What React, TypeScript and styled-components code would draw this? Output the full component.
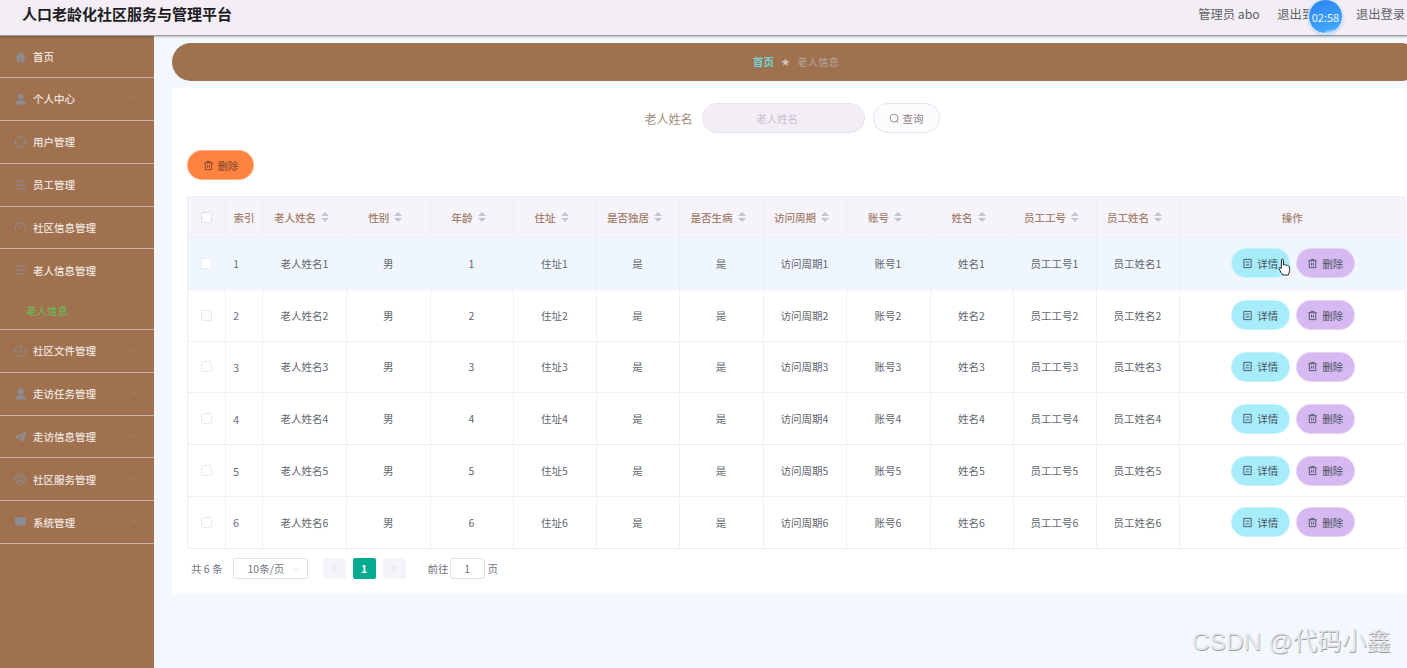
import React from "react";
import styled, { createGlobalStyle } from "styled-components";
import { ChevronDown, ChevronUp, ChevronLeft, ChevronRight, Crosshair, SlidersHorizontal, Gauge, Clock, LifeBuoy, Menu } from "lucide-react";

const Global = createGlobalStyle`
  html, body { margin: 0; padding: 0; height: 100%; overflow: hidden; }
  body { font-family: "Noto Sans CJK SC", "Noto Sans", sans-serif; background: #f3f7fe; }
  * { box-sizing: border-box; }
`;

const Page = styled.div`position: relative; width: 1407px; height: 668px; overflow: hidden; display: flex; flex-direction: column;`;
const Header = styled.header`
  height: 36px; flex: none; background: #f3eef5; display: flex; align-items: center; justify-content: space-between;
  padding: 0 2px 8px 22px; border-bottom: 1px solid #9b9b9f; box-shadow: 0 1px 2px rgba(0,0,0,.25); position: relative; z-index: 2;
`;
const Title = styled.h1`margin: 0; font-size: 15px; line-height: 20px; font-weight: 700; color: #1c1c22;`;
const HeaderLinks = styled.div`display: flex; gap: 17.5px; font-size: 12.25px; color: #5f5f66; line-height: 18px;`;
const Timer = styled.div`
  position: absolute; left: 1308px; top: -1px; width: 35px; height: 35px; border-radius: 50%; z-index: 5; overflow: hidden;
  background: linear-gradient(160deg, #2a86ee 0%, #3ea2fb 75%, #62bdfc 100%);
  border: 1px solid #d9ecfb; box-shadow: 0 1px 3px rgba(60,130,220,.35);
  color: #eaf5ff; font-size: 11px; display: flex; align-items: center; justify-content: center;
  &::after {
    content: ""; position: absolute; left: 8px; right: -6px; bottom: -25px; height: 28px; border-radius: 50%;
    background: rgba(190,232,255,.6); transform: rotate(-10deg);
  }
`;

const Body = styled.div`flex: 1; display: flex; min-height: 0;`;
const Side = styled.nav`width: 154px; flex: none; background: #a0714f; display: flex; flex-direction: column;`;
const NavGroup = styled.div`border-bottom: 1px solid #c9b6a9; flex: none;`;
const NavRow = styled.div<{ $first?: boolean }>`
  height: ${(p) => (p.$first ? 41 : 41.85)}px; display: flex; align-items: center; padding-left: 14px; position: relative;
  color: #f5eee9; font-size: 10.5px; text-shadow: 0 0 1px rgba(255,255,255,.3);
`;
const NavIcon = styled.span`width: 13px; height: 13px; margin-right: 6px; display: flex; align-items: center; justify-content: center; color: #8c8c92;`;
const NavArrow = styled.span`position: absolute; left: 129px; top: 15px; color: #b8947b; display: flex;`;
const SubItem = styled.div`height: 37.7px; padding: 0 0 0 26px; display: flex; align-items: center; color: #62c25a; font-size: 10.5px;`;

const Main = styled.main`flex: 1; min-width: 0; overflow: hidden; padding: 7px 0 0 18px;`;
const Crumb = styled.div`
  width: 1248px; height: 38px; border-radius: 19px; background: #a0714f; display: flex; align-items: center; justify-content: center;
  gap: 7px; font-size: 10.5px; color: #b3a498; padding-bottom: 1px;
`;
const CrumbHome = styled.span`color: #6fd6d4; font-weight: 700;`;
const CrumbStar = styled.span`color: #cfc4bc; font-size: 9px;`;

const Card = styled.section`width: 1248px; height: 506px; margin-top: 7px; background: #fff; padding: 15px 15px 0;`;
const Search = styled.div`display: flex; align-items: center; justify-content: center; height: 30px; padding-right: 8px;`;
const SearchLabel = styled.label`font-size: 12px; color: #a18a7a; margin-right: 9px;`;
const SearchInput = styled.div`
  width: 163px; height: 30px; border-radius: 15px; background: #f3eef6; border: 1px solid #e8e3f0; color: #c6c1cf; padding-right: 12px;
  font-size: 10.5px; display: flex; align-items: center; justify-content: center;
`;
const SearchBtn = styled.button`
  margin-left: 8px; width: 67px; height: 30px; border-radius: 15px; background: #fcfbfe; border: 1px solid #e6e2ef; color: #8d8085;
  font: inherit; font-size: 10.5px; display: flex; align-items: center; justify-content: center; gap: 3px; padding: 0;
`;
const Pill = styled.button<{ $bg: string }>`
  width: ${(p) => (p.$bg === "#ff8240" ? 67 : 59)}px; height: 30px; border-radius: 15px; padding: 0; background: ${(p) => p.$bg};
  border: 1px solid rgba(255,255,255,.35); color: ${(p) => (p.$bg === "#ff8240" ? "#7a4526" : "#475260")};
  font: inherit; font-size: 10.5px; display: inline-flex; align-items: center; justify-content: center; gap: 4px;
`;
const Tools = styled.div`margin-top: 17px; height: 30px; display: flex;`;
const Table = styled.table`
  margin-top: 16px; width: 1218px; table-layout: fixed; border-collapse: collapse; border: 1px solid #edf0f9; font-size: 10.5px; color: #62666e;
`;
const Th = styled.th`
  height: 41px; background: #f6f3fb; border: 1px solid #efedf7; color: #a3806a; font-weight: 500; padding: 0; text-align: center;
`;
const ThInner = styled.span`display: inline-flex; align-items: center; gap: 5px; padding-right: 6px;`;
const Td = styled.td<{ $hover?: boolean; $left?: boolean }>`
  height: 51.8px; border: 1px solid #edf0f9; padding: 0; text-align: center; background: ${(p) => (p.$hover ? "#f0f6fe" : "#fff")};
  ${(p) => p.$left && "text-align: left; padding-left: 7px; font-size: 11px; color: #6e7580;"}
`;
const Check = styled.span<{ $head?: boolean }>`
  display: block; margin: 0 auto; width: 11px; height: 11px; border-radius: 2px; background: #fff;
  border: 1px solid ${(p) => (p.$head ? "#dcdcec" : "#e9e9f3")};
`;
const Sort = styled.span`display: inline-flex; flex-direction: column; gap: 1.5px;`;
const Caret = styled.i<{ $down?: boolean }>`
  display: block; width: 0; height: 0; border-left: 4px solid transparent; border-right: 4px solid transparent;
  ${(p) => (p.$down ? "border-top: 4.5px solid #c4c4d2;" : "border-bottom: 4.5px solid #c4c4d2;")}
`;
const Actions = styled.div`display: flex; justify-content: center; gap: 6px; padding-left: 1px;`;

const Pager = styled.div`display: flex; align-items: center; height: 21px; margin-top: 9px; font-size: 10.5px; color: #707680; padding-left: 4px;`;
const PageSelect = styled.div`
  margin-left: 10px; width: 75px; height: 21px; border: 1px solid #dfe2ec; border-radius: 2px; color: #737983; position: relative;
  display: flex; align-items: center; padding-left: 14px;
`;
const PageSelectArrow = styled.span`position: absolute; right: 6px; top: 5px; color: #c4c8d2; display: flex;`;
const PageBtn = styled.div<{ $active?: boolean; $gap: number }>`
  width: 23px; height: 21px; margin-left: ${(p) => p.$gap}px; border-radius: 2px; display: flex; align-items: center; justify-content: center;
  background: ${(p) => (p.$active ? "#04ab8f" : "#f4f4fb")}; color: ${(p) => (p.$active ? "#fff" : "#c0c4cc")}; font-weight: 700;
`;
const GoInput = styled.div`
  width: 35px; height: 21px; margin: 0 3px 0 1px; border: 1px solid #dfe2ec; border-radius: 3px; display: flex; align-items: center; justify-content: center;
`;
const GoLabel = styled.span`margin-left: 22px;`;

const Watermark = styled.div`
  position: absolute; left: 1192px; top: 625px; font-family: "Liberation Sans", "Noto Sans CJK SC", sans-serif; font-size: 24.5px; line-height: 34px;
  color: #e6e8ec; text-shadow: .6px .6px .6px #9c9c9c; white-space: nowrap; letter-spacing: 0;
`;
const Pointer = styled.svg`position: absolute; left: 1278px; top: 258px; z-index: 4;`;

const Solid = ({ d }: { d: string }) => (
  <svg width="14" height="14" viewBox="0 0 24 24" fill="currentColor"><path d={d} /></svg>
);
const home = "M12 2.5 1.5 12H5v9.500h5.500V15h3v6.500H19V12h3.500z";
const user = "M12 2a5.500 5.500 0 1 1 0 11 5.500 5.500 0 0 1 0-11zM2 22c0-5 3.500-8 10-8s10 3 10 8z";
const plane = "M23 1 1 12l6 3 11-9-8 11v6l4-5 4 2z";
const chat = "M2 3h20v15H9l-4 4v-4H2zM7 10h2v2H7zM11 10h2v2h-2zM15 10h2v2h-2z";

const lucide = { size: 14, strokeWidth: 1.8 };
const menus: { label: string; icon: React.ReactNode; arrow?: boolean; open?: boolean }[] = [
  { label: "首页", icon: <Solid d={home} /> },
  { label: "个人中心", icon: <Solid d={user} />, arrow: true },
  { label: "用户管理", icon: <Crosshair {...lucide} />, arrow: true },
  { label: "员工管理", icon: <SlidersHorizontal {...lucide} />, arrow: true },
  { label: "社区信息管理", icon: <Gauge {...lucide} />, arrow: true },
  { label: "老人信息管理", icon: <Menu {...lucide} />, arrow: true, open: true },
  { label: "社区文件管理", icon: <Clock {...lucide} />, arrow: true },
  { label: "走访任务管理", icon: <Solid d={user} />, arrow: true },
  { label: "走访信息管理", icon: <Solid d={plane} />, arrow: true },
  { label: "社区服务管理", icon: <LifeBuoy {...lucide} />, arrow: true },
  { label: "系统管理", icon: <Solid d={chat} />, arrow: true },
];

const TrashIcon = () => (
  <svg width="11" height="11" viewBox="0 0 12 12" fill="none" stroke="currentColor" strokeWidth="1">
    <path d="M1.500 3h9M4.500 3V1.500h3V3M2.500 3v7.500h7V3M5 5.200v3.200M7 5.200v3.200" />
  </svg>
);
const DocIcon = () => (
  <svg width="11" height="11" viewBox="0 0 12 12" fill="none" stroke="currentColor" strokeWidth="1">
    <path d="M2 1.500h8v9H2zM4 4.500h4M4 7.500h4" />
  </svg>
);
const SearchIcon = () => (
  <svg width="11" height="11" viewBox="0 0 12 12" fill="none" stroke="currentColor" strokeWidth="1">
    <circle cx="5.600" cy="5.600" r="4.300" /><path d="M8.800 8.800 10.500 10.500" />
  </svg>
);

const columns = ["老人姓名", "性别", "年龄", "住址", "是否独居", "是否生病", "访问周期", "账号", "姓名", "员工工号", "员工姓名"];
const widths = [38, 37, 84, 83.5, 83, 83, 83, 84, 83, 84, 83, 83, 83, 226.5];
const rows = [1, 2, 3, 4, 5, 6];
const cells = (n: number) => [`老人姓名${n}`, "男", `${n}`, `住址${n}`, "是", "是", `访问周期${n}`, `账号${n}`, `姓名${n}`, `员工工号${n}`, `员工姓名${n}`];

export default function App() {
  return (
    <Page>
      <Global />
      <Header>
        <Title>人口老龄化社区服务与管理平台</Title>
        <HeaderLinks>
          <span>管理员 abo</span>
          <span>退出到前台</span>
          <span>退出登录</span>
        </HeaderLinks>
      </Header>
      <Timer>02:58</Timer>
      <Body>
        <Side>
          {menus.map((m, i) => (
            <NavGroup key={m.label}>
              <NavRow $first={i === 0}>
                <NavIcon>{m.icon}</NavIcon>
                {m.label}
                {m.arrow && (
                  <NavArrow>{m.open ? <ChevronUp size={10} strokeWidth={1} /> : <ChevronDown size={10} strokeWidth={1} />}</NavArrow>
                )}
              </NavRow>
              {m.open && <SubItem>老人信息</SubItem>}
            </NavGroup>
          ))}
        </Side>
        <Main>
          <Crumb>
            <CrumbHome>首页</CrumbHome>
            <CrumbStar>★</CrumbStar>
            <span>老人信息</span>
          </Crumb>
          <Card>
            <Search>
              <SearchLabel>老人姓名</SearchLabel>
              <SearchInput>老人姓名</SearchInput>
              <SearchBtn><SearchIcon />查询</SearchBtn>
            </Search>
            <Tools>
              <Pill $bg="#ff8240"><TrashIcon />删除</Pill>
            </Tools>
            <Table>
              <colgroup>
                {widths.map((w, i) => <col key={i} width={w} />)}
              </colgroup>
              <thead>
                <tr>
                  <Th><Check $head /></Th>
                  <Th>索引</Th>
                  {columns.map((c) => (
                    <Th key={c}>
                      <ThInner>{c}<Sort><Caret /><Caret $down /></Sort></ThInner>
                    </Th>
                  ))}
                  <Th>操作</Th>
                </tr>
              </thead>
              <tbody>
                {rows.map((n) => (
                  <tr key={n}>
                    <Td $hover={n === 1}><Check /></Td>
                    <Td $hover={n === 1} $left>{n}</Td>
                    {cells(n).map((c, i) => <Td key={i} $hover={n === 1}>{c}</Td>)}
                    <Td $hover={n === 1}>
                      <Actions>
                        <Pill $bg="#a6ecfb"><DocIcon />详情</Pill>
                        <Pill $bg="#d7b9f2"><TrashIcon />删除</Pill>
                      </Actions>
                    </Td>
                  </tr>
                ))}
              </tbody>
            </Table>
            <Pager>
              <span>共 6 条</span>
              <PageSelect>
                10条/页
                <PageSelectArrow><ChevronDown size={11} strokeWidth={1} /></PageSelectArrow>
              </PageSelect>
              <PageBtn $gap={15}><ChevronLeft size={10} strokeWidth={2} /></PageBtn>
              <PageBtn $gap={7} $active>1</PageBtn>
              <PageBtn $gap={7}><ChevronRight size={10} strokeWidth={2} /></PageBtn>
              <GoLabel>前往</GoLabel>
              <GoInput>1</GoInput>
              <span>页</span>
            </Pager>
          </Card>
        </Main>
      </Body>
      <Pointer width="14" height="19" viewBox="0 0 14 19">
        <path d="M3.500 1.500c.8-.8 2-.4 2 .8V7l1-.3c.6-.1 1 .1 1.200.5.6-.3 1.300-.2 1.600.4.6-.3 1.400-.1 1.700.6.6 1 .9 2.500.6 4.500-.2 1.600-.8 3-1.300 4.300H4.800C3.800 15.500 2 13 1 10.800c-.4-.9.5-1.700 1.300-1.100l1 .9z" fill="#fff" stroke="#222" strokeWidth="1" />
      </Pointer>
      <Watermark>CSDN @代码小鑫</Watermark>
    </Page>
  );
}
